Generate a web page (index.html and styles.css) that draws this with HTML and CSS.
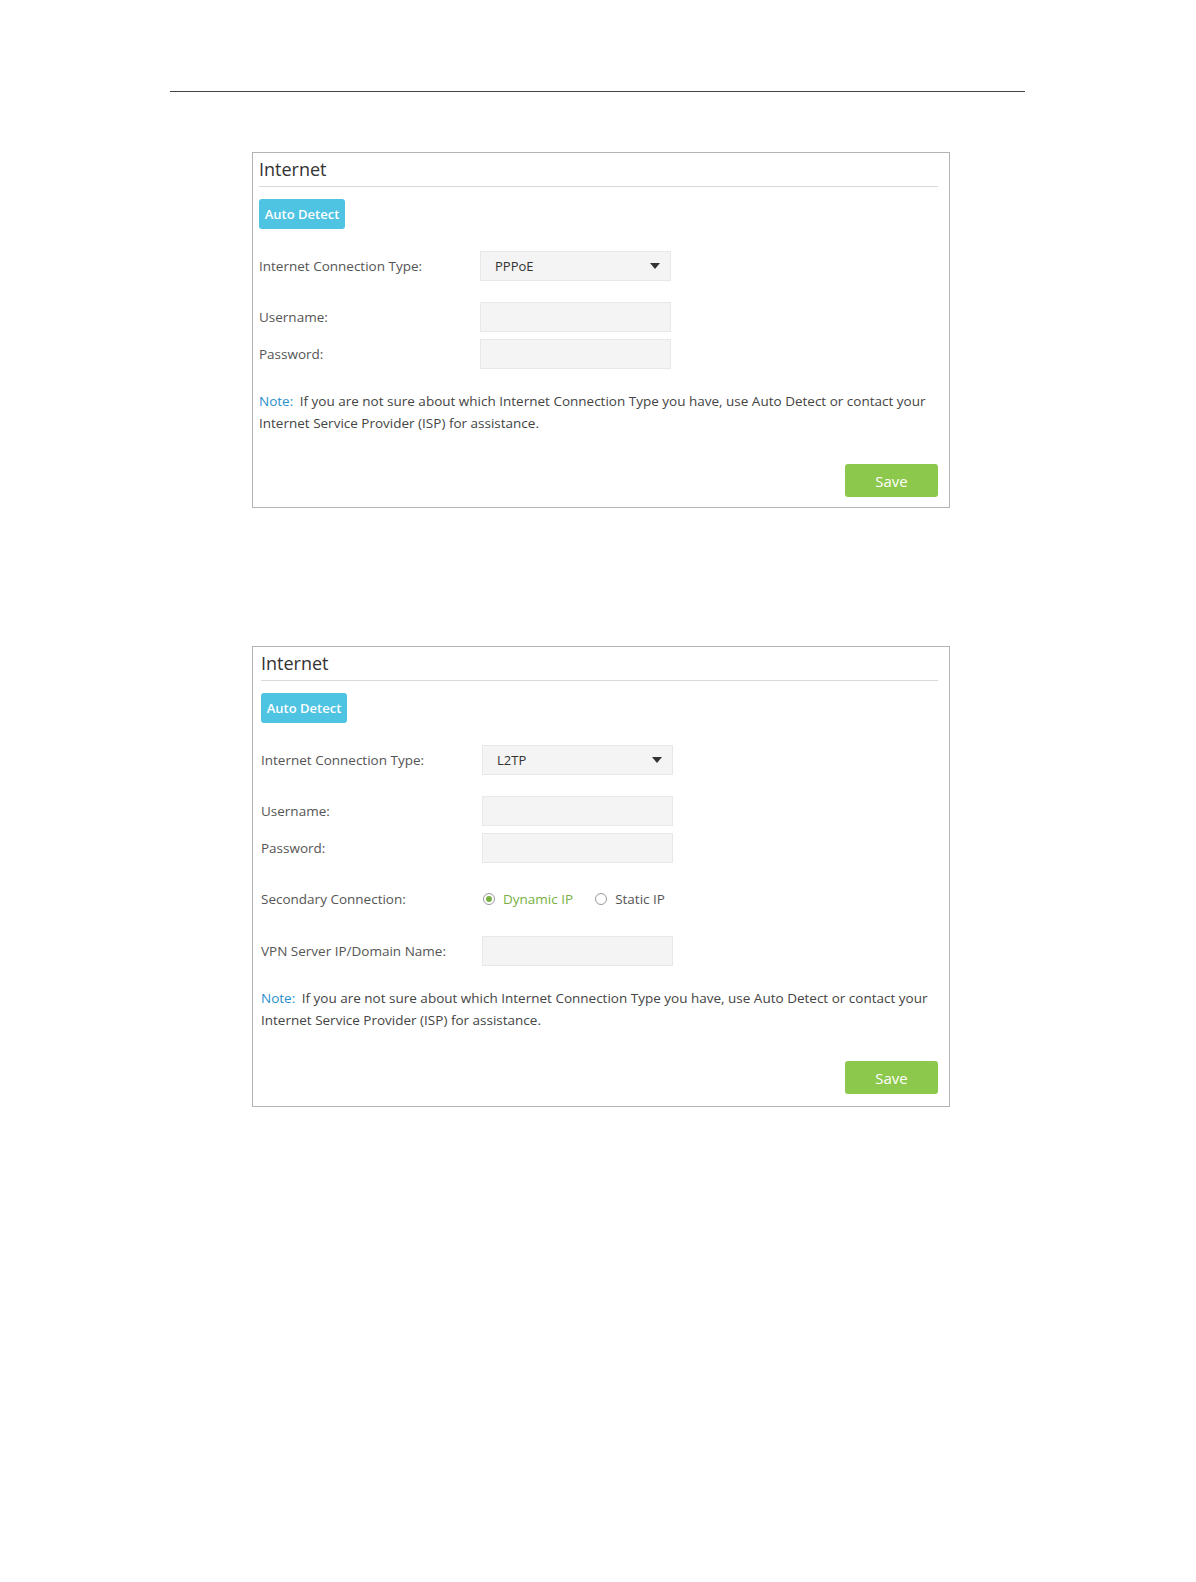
FILE: index.html
```html
<!DOCTYPE html>
<html lang="en">
<head>
    <meta charset="UTF-8">
    <title>Internet</title>
    <link rel="stylesheet" href="styles.css">
</head>
<body>
<div class="page">
    <div class="rule"></div>

    <div class="panel">
        <h2 class="panel-title">Internet</h2>
        <button type="button" class="btn-detect">Auto Detect</button>

        <div class="row row-first">
            <label class="label">Internet Connection Type:</label>
            <div class="select">PPPoE<span class="arrow"></span></div>
        </div>
        <div class="row row-gap">
            <label class="label">Username:</label>
            <input type="text" class="field">
        </div>
        <div class="row row-tight">
            <label class="label">Password:</label>
            <input type="password" class="field">
        </div>

        <p class="note"><span class="note-tag">Note:</span> If you are not sure about which Internet Connection Type you have, use Auto Detect or contact your Internet Service Provider (ISP) for assistance.</p>

        <div class="actions">
            <button type="button" class="btn-save">Save</button>
        </div>
    </div>

    <div class="panel panel-second">
        <h2 class="panel-title">Internet</h2>
        <button type="button" class="btn-detect">Auto Detect</button>

        <div class="row row-first">
            <label class="label">Internet Connection Type:</label>
            <div class="select">L2TP<span class="arrow"></span></div>
        </div>
        <div class="row row-gap">
            <label class="label">Username:</label>
            <input type="text" class="field">
        </div>
        <div class="row row-tight">
            <label class="label">Password:</label>
            <input type="password" class="field">
        </div>
        <div class="row row-gap">
            <label class="label">Secondary Connection:</label>
            <div class="radios">
                <span class="radio checked"><span class="dot"></span>Dynamic IP</span>
                <span class="radio"><span class="dot"></span>Static IP</span>
            </div>
        </div>
        <div class="row row-vpn">
            <label class="label">VPN Server IP/Domain Name:</label>
            <input type="text" class="field">
        </div>

        <p class="note"><span class="note-tag">Note:</span> If you are not sure about which Internet Connection Type you have, use Auto Detect or contact your Internet Service Provider (ISP) for assistance.</p>

        <div class="actions">
            <button type="button" class="btn-save">Save</button>
        </div>
    </div>
</div>
</body>
</html>
```

FILE: styles.css
```css
body {
    margin: 0;
    background-color: #fff;
    font-family: "Open Sans", "Liberation Sans", sans-serif;
    font-size: 13.5px;
    color: #555;
}
.page {
    width: 855px;
    margin-left: 170px;
    padding-top: 91px;
}
.rule {
    border-top: 1px solid #444;
}
.panel {
    width: 698px;
    box-sizing: border-box;
    margin: 60px 0 0 82px;
    padding: 4px 11px 10px 6px;
    border: 1px solid #b3b3b3;
}
.panel-second {
    margin-top: 138px;
    padding-left: 8px;
    padding-bottom: 12px;
}
.panel-title {
    margin: 0;
    padding-bottom: 5px;
    font-size: 18px;
    font-weight: normal;
    line-height: 24px;
    color: #333;
    border-bottom: 1px solid #d9d9d9;
}
.btn-detect {
    display: block;
    margin-top: 12px;
    width: 86px;
    height: 30px;
    padding: 0;
    border: none;
    border-radius: 3px;
    background-color: #4ec3e2;
    color: #fff;
    font-family: inherit;
    font-size: 13px;
    font-weight: 600;
}
.row {
    display: flex;
    align-items: center;
    height: 30px;
}
.row-first { margin-top: 22px; }
.row-gap { margin-top: 21px; }
.row-tight { margin-top: 7px; }
.row-vpn { margin-top: 22px; }
.label {
    width: 221px;
    flex: none;
}
.select, .field {
    width: 191px;
    height: 30px;
    box-sizing: border-box;
    background-color: #f4f4f4;
    border: 1px solid #e8e8e8;
    margin: 0;
}
.select {
    display: flex;
    align-items: center;
    justify-content: space-between;
    padding: 0 10px 0 14px;
    font-size: 13px;
    color: #333;
}
.arrow {
    width: 0;
    height: 0;
    border-left: 5px solid transparent;
    border-right: 5px solid transparent;
    border-top: 6px solid #333;
}
.radios {
    display: flex;
    gap: 22px;
    padding-left: 1px;
}
.radio {
    display: flex;
    align-items: center;
    gap: 8px;
    color: #555;
}
.radio .dot {
    width: 12px;
    height: 12px;
    box-sizing: border-box;
    border: 1px solid #999;
    border-radius: 50%;
    position: relative;
}
.radio.checked {
    color: #78b043;
}
.radio.checked .dot::after {
    content: "";
    position: absolute;
    left: 2px;
    top: 2px;
    width: 6px;
    height: 6px;
    border-radius: 50%;
    background-color: #78b043;
}
.note {
    margin: 21px 0 0;
    line-height: 22px;
    color: #444;
}
.note-tag {
    margin-right: 3px;
    color: #2b8fcc;
}
.actions {
    display: flex;
    justify-content: flex-end;
    margin-top: 30px;
}
.btn-save {
    width: 93px;
    height: 33px;
    padding: 0;
    border: none;
    border-radius: 3px;
    background-color: #8cc84b;
    color: #fff;
    font-family: inherit;
    font-size: 15px;
}
```
